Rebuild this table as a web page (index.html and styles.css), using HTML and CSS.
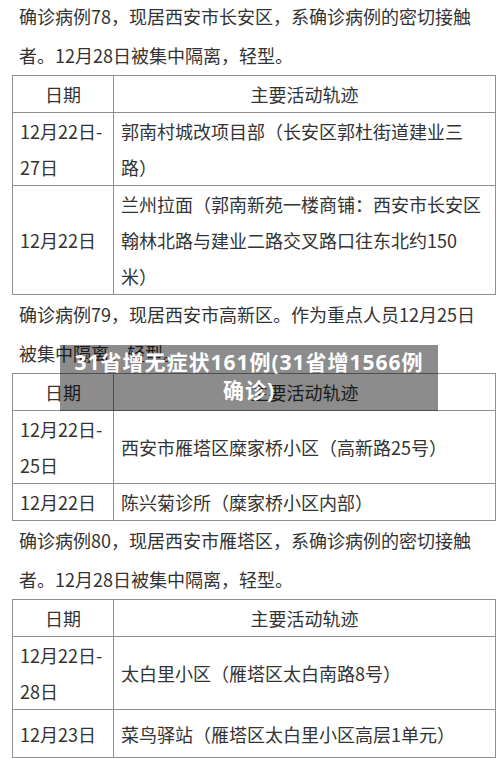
FILE: index.html
```html
<!DOCTYPE html>
<html lang="zh">
<head>
<meta charset="utf-8">
<link rel="stylesheet" href="styles.css">
</head>
<body>
<div class="doc">
  <p class="para first">确诊病例78，现居西安市长安区，系确诊病例的密切接触<br>者。12月28日被集中隔离，轻型。</p>
  <table class="trace">
    <tr class="h36"><th class="c1">日期</th><th class="c2">主要活动轨迹</th></tr>
    <tr class="h71"><td class="c1">12月22日-<br>27日</td><td class="c2">郭南村城改项目部（长安区郭杜街道建业三<br>路）</td></tr>
    <tr class="h108"><td class="c1">12月22日</td><td class="c2">兰州拉面（郭南新苑一楼商铺：西安市长安区<br>翰林北路与建业二路交叉路口往东北约150<br>米）</td></tr>
  </table>
  <p class="para">确诊病例79，现居西安市高新区。作为重点人员12月25日<br>被集中隔离，轻型。</p>
  <table class="trace">
    <tr class="h37"><th class="c1">日期</th><th class="c2">主要活动轨迹</th></tr>
    <tr class="h71"><td class="c1">12月22日-<br>25日</td><td class="c2">西安市雁塔区糜家桥小区（高新路25号）</td></tr>
    <tr class="h35"><td class="c1">12月22日</td><td class="c2">陈兴菊诊所（糜家桥小区内部）</td></tr>
  </table>
  <p class="para">确诊病例80，现居西安市雁塔区，系确诊病例的密切接触<br>者。12月28日被集中隔离，轻型。</p>
  <table class="trace">
    <tr class="h36"><th class="c1">日期</th><th class="c2">主要活动轨迹</th></tr>
    <tr class="h71"><td class="c1">12月22日-<br>28日</td><td class="c2">太白里小区（雁塔区太白南路8号）</td></tr>
    <tr class="h48"><td class="c1">12月23日</td><td class="c2">菜鸟驿站（雁塔区太白里小区高层1单元）</td></tr>
  </table>
</div>
<div class="caption">31省增无症状161例(31省增1566例<br>确诊)</div>
</body>
</html>
```

FILE: styles.css
```css
html, body {
  margin: 0;
  padding: 0;
  background: #ffffff;
}
body {
  width: 500px;
  height: 758px;
  overflow: hidden;
  position: relative;
  font-family: "Noto Sans CJK SC", "Noto Sans", sans-serif;
  color: #333333;
}
.doc {
  padding: 0 6px 0 12px;
}
.para {
  margin: 0;
  padding-left: 7px;
  font-size: 18px;
  line-height: 39px;
  white-space: nowrap;
}
.para.first {
  margin-top: -3px;
}
.trace {
  border-collapse: collapse;
  width: 481px;
  font-size: 18px;
  table-layout: fixed;
}
.trace th, .trace td {
  border: 1px solid #8e8e8e;
  padding: 0 0 0 7px;
  line-height: 36px;
  vertical-align: middle;
  text-align: left;
  font-weight: normal;
  white-space: nowrap;
}
.trace th {
  text-align: center;
  padding: 0;
}
.trace .c1 { width: 100px; }
.trace .c2 { width: 381px; }
.h35 { height: 35px; }
.h36 { height: 36px; }
.h37 { height: 37px; }
.h48 { height: 48px; }
.h71 { height: 71px; }
.h108 { height: 108px; }
.caption {
  position: absolute;
  left: 60px;
  top: 345px;
  width: 378px;
  height: 66px;
  box-sizing: border-box;
  padding-top: 3px;
  background: rgba(0, 0, 0, 0.45);
  color: #ffffff;
  font-family: "Open Sans", "Noto Sans CJK SC", sans-serif;
  font-weight: bold;
  font-size: 21px;
  letter-spacing: 1px;
  line-height: 28px;
  text-align: center;
  white-space: nowrap;
}
```
